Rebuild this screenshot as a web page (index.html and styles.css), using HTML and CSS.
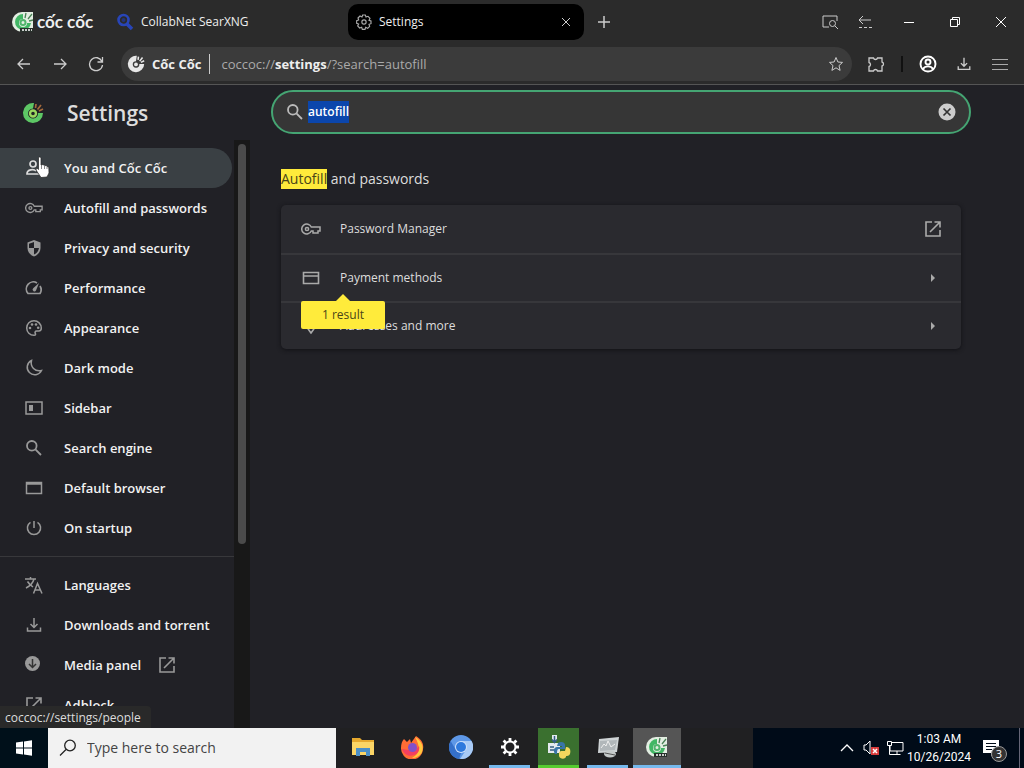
FILE: index.html
```html
<!DOCTYPE html>
<html lang="en">
<head>
<meta charset="utf-8">
<title>Settings</title>
<link rel="stylesheet" href="styles.css">
</head>
<body>
<svg class="sprite" aria-hidden="true">
  <symbol id="key" viewBox="0 0 20 14"><g fill="none" stroke="currentColor" stroke-width="1.5"><path d="M10.3 5A5 5 0 1 0 10.3 9H12v2h5V9h2V5Z"/><circle cx="6" cy="7" r="1.6"/></g></symbol>
  <symbol id="search" viewBox="0 0 18 18"><g fill="none" stroke="currentColor" stroke-width="1.8"><circle cx="6.8" cy="6.8" r="4.8"/><path d="m10.4 10.4 5.6 5.6"/></g></symbol>
  <symbol id="open" viewBox="0 0 18 18"><path d="M8 2H2v14h14v-6M10.500 2H16v5.500M16 2 6 12" fill="none" stroke="currentColor" stroke-width="1.6"/></symbol>
  <symbol id="download" viewBox="0 0 18 18"><path d="M9 2v9M5.500 8 9 11.500 12.500 8M2.500 11.500V15h13v-3.500" fill="none" stroke="currentColor" stroke-width="1.5"/></symbol>
  <symbol id="coc" viewBox="0 0 22 22"><path d="M12 1A10 10 0 1 0 21 11L15 11A4 4 0 1 1 11 7.500Z" fill="currentColor"/><circle cx="11" cy="11.500" r="2.300" fill="currentColor"/><path d="m13.500 6 .5-4M15.500 7.500 19 3M17 9l4-2" fill="none" stroke="currentColor" stroke-width="1.900"/></symbol>
  <symbol id="cocbox" viewBox="0 0 22 22"><path d="M10 1H21V21H10A10 10 0 0 1 10 1Z" fill="#e3eee2"/><path d="M11 3A8 8 0 1 0 19 12h-4a4 4 0 1 1-4-4Z" fill="#42b765"/><circle cx="11" cy="11.500" r="2.500" fill="none" stroke="#51b56d" stroke-width="2"/><path d="m13 7 1-5M16 8l4-5M17 10l4-1" stroke="#498256" stroke-width="1.300"/><path d="M8 17h13v4H8z" fill="#27302b"/><path d="M10 19h10" stroke="#fff" stroke-width="1.500" stroke-dasharray="2 1"/></symbol>
  <symbol id="arrow" viewBox="0 0 6 10"><path d="M1 1v8l4-4Z" fill="currentColor"/></symbol>
</svg>

<header class="titlebar">
  <div class="brand"><svg class="i22"><use href="#cocbox"/></svg><span>cốc cốc</span></div>
  <button class="tab">
    <svg class="i18" viewBox="0 0 18 18"><g fill="none" stroke="#2845b8" stroke-width="2.600"><circle cx="7.500" cy="7" r="5"/><path d="m11 11 5 5" stroke-width="3.500"/></g><circle cx="7.500" cy="7" r="2" fill="#24337d"/></svg>
    <span>CollabNet SearXNG</span>
  </button>
  <div class="tab active">
    <svg class="i16" viewBox="0 0 24 24" fill="none" stroke="#aaa" stroke-width="1.700"><path d="M10 1.500h4l1 3 3-1 3 3-1.500 3 3 1v4l-3 1 1 3-3 3-3-1.500-1 3h-4l-1-3-3 1-3-3 1.500-3-3-1v-4l3-1-1-3 3-3 3 1.500Z"/><circle cx="12" cy="12" r="3.200"/></svg>
    <span>Settings</span>
    <button class="tool" aria-label="Close tab"><svg class="i12" viewBox="0 0 12 12"><path d="m2 2 8 8m0-8-8 8"/></svg></button>
  </div>
  <button class="tool" aria-label="New tab"><svg class="i14" viewBox="0 0 14 14"><path d="M7 1v12M1 7h12" stroke-width="1.500"/></svg></button>
  <div class="window-tools">
    <button class="tool" aria-label="Search tabs"><svg class="i18" viewBox="0 0 18 18"><path d="M8 14H2V3h14v5"/><circle cx="11.500" cy="10.500" r="3"/><path d="m14 13 3 3"/></svg></button>
    <button class="tool" aria-label="Recent tabs"><svg class="i16" viewBox="0 0 16 16"><path d="M14 6H2M6 2 2 6l4 4M2 13.500h3m2 0h3m2 0h3"/></svg></button>
  </div>
  <div class="window-controls">
    <button class="tool" aria-label="Minimize"><svg class="i12" viewBox="0 0 12 12"><path d="M1 6.500h10"/></svg></button>
    <button class="tool" aria-label="Restore"><svg class="i12" viewBox="0 0 12 12"><path d="M1.500 3.500h7v7h-7zM3.500 3V1.500h7v7H9"/></svg></button>
    <button class="tool" aria-label="Close"><svg class="i12" viewBox="0 0 12 12"><path d="m1 1 10 10M11 1 1 11"/></svg></button>
  </div>
</header>

<nav class="toolbar" aria-label="Browser">
  <button class="tool" aria-label="Back"><svg class="i16" viewBox="0 0 16 16"><path d="M14 8H2m5-5L2 8l5 5" stroke-width="1.300"/></svg></button>
  <button class="tool" aria-label="Forward"><svg class="i16" viewBox="0 0 16 16"><path d="M2 8h12M9 3l5 5-5 5" stroke-width="1.300"/></svg></button>
  <button class="tool" aria-label="Reload"><svg class="i16" viewBox="0 0 16 16"><path d="M14 5.500A6.500 6.500 0 1 0 14.500 9M14.500 1v5H9.500" stroke-width="1.300"/></svg></button>
  <div class="address">
    <svg class="i18"><use href="#coc"/></svg><b class="site">Cốc Cốc</b>
    <div class="url" role="textbox" contenteditable="true" spellcheck="false" aria-label="Address">coccoc://<b>settings</b>/?search=autofill</div>
    <button class="tool" aria-label="Bookmark"><svg class="i16" viewBox="0 0 16 16"><path d="m8 1.500 1.900 4.500 4.600.4-3.500 3.200 1.100 4.800L8 11.800l-4.100 2.600L5 9.600 1.500 6.400 6.100 6Z"/></svg></button>
  </div>
  <div class="actions">
    <button class="tool" aria-label="Extensions"><svg class="i18" viewBox="0 0 18 18"><path d="M2 3h4.500C7 5 10 5 10.500 3H15v4c2 .5 2 3.500 0 4v5h-4.500c-.5-2-3.500-2-4 0H2v-4.500c2-.5 2-3.500 0-4Z" stroke-width="1.300"/></svg></button>
    <span class="rule"></span>
    <button class="tool" aria-label="Profile"><svg class="i18 bright" viewBox="0 0 18 18"><circle cx="9" cy="9" r="7.500" stroke-width="1.900"/><circle cx="9" cy="7" r="2.500" stroke-width="1.900"/><path d="M4 14c2-3.500 8-3.500 10 0" stroke-width="1.900"/></svg></button>
    <button class="tool" aria-label="Downloads"><svg class="i16"><use href="#download"/></svg></button>
    <button class="tool" aria-label="Menu"><svg class="i16 dim" viewBox="0 0 16 16"><path d="M0 3.500h16M0 8.500h16M0 13.500h16"/></svg></button>
  </div>
</nav>

<div class="content">
  <aside class="sidebar">
    <div class="side-head"><svg class="i22" viewBox="0 0 22 22"><path d="M12 1A10 10 0 1 0 21 11L16 11A5 5 0 1 1 11 6.500Z" fill="#5dc765"/><circle cx="11" cy="11.500" r="3" fill="none" stroke="#9bd85f" stroke-width="2.400"/><path d="m13.500 6 .5-4M15.500 7.500 19 3M17 9l4-2" stroke="#a56a3c" stroke-width="1.700"/></svg><h1>Settings</h1></div>
    <div class="side-body">
      <nav class="menus" aria-label="Settings">
        <ul class="menu">
          <li><a href="#people" class="current"><svg class="i18" viewBox="0 0 18 18"><g fill="none" stroke="#ddd" stroke-width="1.700"><circle cx="8" cy="5" r="3"/><path d="M14 15H2c0-5 7-5 9-3"/></g></svg>You and Cốc Cốc</a>
            <svg class="cursor" viewBox="0 0 14 24"><path d="M3 1.500c1-1 2.500-.5 2.500 1V9l1-.5 2 .5.800.5 1.700.3.500.7 1.800.5.200 6-2 4-6 .5L.5 14c0-2 1.500-2 2.500-.5Z" fill="#fff" stroke="#222" stroke-width=".7"/><path d="M6 9v4M9 10v3M11.500 11v2" stroke="#555" stroke-width=".7"/></svg></li>
          <li><a href="#autofill"><svg class="i18"><use href="#key"/></svg>Autofill and passwords</a></li>
          <li><a href="#privacy"><svg class="i18" viewBox="0 0 18 18"><path d="M9 1 2.500 3.500V9C2.500 13 5 16 9 17.500 13 16 15.500 13 15.500 9V3.500Z" fill="currentColor"/><path d="M9 3v6H4V4.800ZM9 9h5c-.4 3-2.200 5.300-5 6.500Z" fill="#212126"/></svg>Privacy and security</a></li>
          <li><a href="#performance"><svg class="i18" viewBox="0 0 18 18"><path d="M12 4A7 7 0 0 0 3 14.500h12A7 7 0 0 0 15 7" fill="none" stroke="currentColor" stroke-width="1.700"/><path d="m14 4-3 7.500a1.800 1.800 0 1 1-2.800-2.200Z" fill="currentColor"/></svg>Performance</a></li>
          <li><a href="#appearance"><svg class="i18" viewBox="0 0 18 18"><path d="M9 1.700a7.300 7.300 0 1 0 0 14.600c2 0 1.700-1.300 1.200-2-.5-1 0-2.200 1.300-2.200h2.300c1.500 0 2.500-1.400 2.500-3C16.300 5 13 1.700 9 1.700Z" fill="none" stroke="currentColor" stroke-width="1.500"/><g fill="currentColor"><circle cx="5" cy="9" r="1.300"/><circle cx="7" cy="5.500" r="1.300"/><circle cx="11" cy="5.500" r="1.300"/><circle cx="13.200" cy="8.700" r="1.300"/></g></svg>Appearance</a></li>
          <li><a href="#dark"><svg class="i18" viewBox="0 0 18 18"><path d="M6.500 1.500a7.500 7.500 0 1 0 10 10C10 13 5 8 6.500 1.500Z" fill="none" stroke="currentColor" stroke-width="1.500"/></svg>Dark mode</a></li>
          <li><a href="#sidebar"><svg class="i18" viewBox="0 0 18 18"><path d="M1 3h16v12H1z" fill="none" stroke="currentColor" stroke-width="1.500"/><path d="M4 6h4v6H4z" fill="currentColor"/></svg>Sidebar</a></li>
          <li><a href="#engine"><svg class="i18"><use href="#search"/></svg>Search engine</a></li>
          <li><a href="#browser"><svg class="i18" viewBox="0 0 18 18"><path d="M1.500 3.500h15v11h-15zM1.500 5h15" fill="none" stroke="currentColor" stroke-width="1.500"/></svg>Default browser</a></li>
          <li><a href="#startup"><svg class="i18" viewBox="0 0 18 18"><path d="M9 2v7M5.500 3.300a6.600 6.600 0 1 0 7 0" fill="none" stroke="currentColor" stroke-width="1.500"/></svg>On startup</a></li>
        </ul>
        <ul class="menu">
          <li><a href="#languages"><svg class="i18" viewBox="0 0 18 18"><path d="M0 3h11M5.500 1v2M9 3C8 7 4 10.500 1 12M2.500 5.500C4 8 6 9.500 8 11M8.500 17.500 12.500 7.500l4.500 10M10 14h5.500" fill="none" stroke="currentColor" stroke-width="1.500"/></svg>Languages</a></li>
          <li><a href="#downloads"><svg class="i18"><use href="#download"/></svg>Downloads and torrent</a></li>
          <li><a href="#media"><svg class="i18" viewBox="0 0 18 18"><circle cx="7.500" cy="7.500" r="7.500" fill="currentColor"/><path d="M7.500 3v8M4 8l3.500 3.500L11 8" fill="none" stroke="#333" stroke-width="1.500"/></svg>Media panel<svg class="i18 out"><use href="#open"/></svg></a></li>
          <li><a href="#adblock"><svg class="i18"><use href="#open"/></svg>Adblock</a></li>
        </ul>
      </nav>
      <div class="scroll"><div class="thumb"></div></div>
    </div>
  </aside>
  <main>
    <div class="find"><label for="q" aria-label="Search settings"><svg class="i18"><use href="#search"/></svg></label><input id="q" type="text" value="autofill" spellcheck="false"><button aria-label="Clear search"><svg class="i18" viewBox="0 0 18 18"><circle cx="9" cy="9" r="8.500" fill="#ccc"/><path d="m5.500 5.500 7 7m0-7-7 7" stroke="#333" stroke-width="1.700"/></svg></button></div>
    <section class="results">
      <h2><mark>Autofill</mark> and passwords</h2>
      <div class="card">
        <a href="#pm"><svg class="i20"><use href="#key"/></svg><span>Password Manager</span><svg class="i18"><use href="#open"/></svg></a>
        <a href="#pay"><svg class="i20" viewBox="0 0 20 20"><path d="M2.500 4.500h15v11h-15zM2.500 8h15" fill="none" stroke="currentColor" stroke-width="1.600"/></svg><span>Payment methods</span><svg class="chev"><use href="#arrow"/></svg></a>
        <a href="#addr"><svg class="i20" viewBox="0 0 20 20"><path d="M10 17C7 13 5 10.500 5 8a5 5 0 0 1 10 0c0 2.500-2 5-5 9Z" fill="none" stroke="currentColor" stroke-width="1.600"/></svg><span>Addresses and more</span><svg class="chev"><use href="#arrow"/></svg></a>
        <div class="bubble" role="status">1 result</div>
      </div>
    </section>
  </main>
  <div class="status">coccoc://settings/people</div>
</div>

<footer class="taskbar">
  <button class="start" aria-label="Start"><svg class="i16" viewBox="0 0 16 16"><path d="m0 2.500 7-1v6H0Zm8-1L16 .3v7.200H8ZM0 8.500h7v6l-7-1Zm8 0h8v7.200l-8-1.200Z" fill="#fff"/></svg></button>
  <div class="winsearch"><label for="win" aria-label="Windows search"><svg class="i18" viewBox="0 0 18 18"><g fill="none" stroke="#222" stroke-width="1.300"><circle cx="11" cy="6.500" r="5.300"/><path d="m7 10.500-6 6"/></g></svg></label><input id="win" type="text" placeholder="Type here to search"></div>
  <div class="apps">
    <button class="app" aria-label="File Explorer"><svg class="i24" viewBox="0 0 24 24"><path d="M1 3h8l2 2h12v15H1z" fill="#e6a92e"/><path d="M1 7h22v13H1z" fill="#fbd566"/><path d="M5 21v-8h14v8h-4v-4H9v4z" fill="#4b8fc7"/></svg></button>
    <button class="app" aria-label="Firefox"><svg class="i24" viewBox="0 0 24 24"><path d="M4 4 7 7l3-3 1 4 5-7c6 4 8 8 7 13a11 11 0 0 1-22-1C1 9 2 6 4 4Z" fill="#ff6c35"/><path d="M15 2c7 4 9 10 7 15-2 4-6 6-10 6 9-5 8-12 3-21Z" fill="#ffc83d"/><path d="M2 14c2 6 7 8 12 6 4-1 6-5 5-9l-4 5Z" fill="#f43f60"/><circle cx="12.500" cy="12.500" r="4.500" fill="#8150c9"/></svg></button>
    <button class="app" aria-label="Chromium"><svg class="i24" viewBox="0 0 24 24"><circle cx="12" cy="12" r="12" fill="#5e98e7"/><path d="M12 6h10.500A12 12 0 0 1 11 24l6-9Z" fill="#a9cbf6"/><path d="M1.600 6 7 15l5 3-2 6A12 12 0 0 1 1.600 6Z" fill="#3570c9"/><circle cx="12" cy="12" r="6" fill="#cfe0fa"/><circle cx="12" cy="12" r="5" fill="#2e79dd"/></svg></button>
    <button class="app running" aria-label="Settings app"><svg class="i20" viewBox="0 0 20 20" fill="none" stroke="#fff"><circle cx="10" cy="10" r="5.500" stroke-width="2"/><path d="M10 1v3m0 12v3M1 10h3m12 0h3M3.600 3.600l2.200 2.200m8.400 8.400 2.200 2.200m0-12.800-2.200 2.200m-8.400 8.400-2.200 2.200" stroke-width="2.800"/></svg></button>
    <button class="app python" aria-label="Python"><svg class="i24" viewBox="0 0 24 24"><path d="M5 0h5v6H5zM1 8h12v10H1z" fill="#e3e9ef"/><path d="M7.500 1v6M5 4.500l2.500 3 2.500-3M3 12h4M3 15h6" fill="none" stroke="#355d83" stroke-width="1.500"/><path d="M11 8c3-2 7-1 7 2v4h-6c-2 0-2 2-2 5H8c-2-3-1-7 2-7h5v-1h-5Z" fill="#3975a8"/><path d="M19 12c4 0 5 3 4 7-1 2-3 2-4 2 1 3-6 4-7 0v-3c0-2 2-2 6-2Z" fill="#f3d85d"/></svg></button>
    <button class="app running" aria-label="Monitor"><svg class="i24" viewBox="0 0 24 24"><path d="m3 4 20-2-2 15-19 1Z" fill="#ced3d5"/><path d="m4 6 17-1-2 10-15 1Z" fill="#b1b7ba"/><path d="m5 13 3-4 2 2 2-5 3 6 4-3" fill="none" stroke="#eee"/><ellipse cx="14" cy="19" rx="6" ry="3.500" fill="#c5caca"/><path d="m9 18 10 2" stroke="#555"/></svg></button>
    <button class="app front" aria-label="Cốc Cốc"><svg class="i22"><use href="#cocbox"/></svg></button>
  </div>
  <div class="tray">
    <button class="tool" aria-label="Hidden icons"><svg class="i14" viewBox="0 0 14 14"><path d="m1 10 6-6 6 6" stroke-width="1.300"/></svg></button>
    <button class="tool" aria-label="Volume muted"><svg class="i18" viewBox="0 0 18 18"><path d="M2 6h2l4-4v13l-4-4H2Z"/><path d="M9 8h8v8H9z" fill="#d83a3a" stroke="none"/><path d="m11 10 4 4m0-4-4 4" stroke-width="1.500"/></svg></button>
    <button class="tool" aria-label="Network"><svg class="i18" viewBox="0 0 18 18"><path d="M5 3.500h12v8.500H4V7M1.500 2.500h4v4h-4zM3.500 7v8.500h5M11 12v3M7.500 15.500h7"/></svg></button>
    <button class="clock"><span>1:03 AM</span><span>10/26/2024</span></button>
    <button class="tool note" aria-label="3 notifications"><svg class="i18" viewBox="0 0 18 18"><path d="M1 1h16v13h-5l-3 3v-3H1z" fill="#fff" stroke="none"/><path d="M4 4.500h10M4 7.500h10M4 10.500h6" stroke="#000b18"/></svg><span class="badge">3</span></button>
    <button class="desktop" aria-label="Show desktop"></button>
  </div>
</footer>
<script src="app.js"></script>
</body>
</html>
```

FILE: styles.css
```css
* { box-sizing: border-box; }
body { margin: 0; height: 100vh; display: flex; flex-direction: column; overflow: hidden; background: #2b2b2b; color: #e8e8e8; font: 13px/20px "Open Sans", "Noto Sans", sans-serif; }
button { padding: 0; border: 0; background: none; color: inherit; font: inherit; }
input { min-width: 0; border: 0; outline: 0; background: none; font: inherit; }
a { color: inherit; text-decoration: none; }
b { font-weight: 700; }
svg { display: block; flex: none; }
.sprite { position: absolute; width: 0; height: 0; }
.i12 { width: 12px; height: 12px; }
.i14 { width: 14px; height: 14px; }
.i16 { width: 16px; height: 16px; }
.i18 { width: 18px; height: 18px; }
.i20 { width: 20px; height: 20px; }
.i22 { width: 22px; height: 22px; }
.i24 { width: 24px; height: 24px; }
.tool { display: flex; align-items: center; justify-content: center; flex: none; width: 36px; height: 36px; color: #ccc; }
.tool svg { fill: none; stroke: #ccc; }
.tool .bright { stroke: #fff; }
.tool .dim { stroke: #aaa; }

.titlebar { display: flex; align-items: center; flex: none; height: 44px; }
.brand { display: flex; align-items: center; gap: 3px; width: 106px; padding-left: 12px; color: #eee; font: 700 17px/24px "Lato", "Open Sans", sans-serif; white-space: nowrap; }
.tab { display: flex; align-items: center; gap: 7px; flex: 0 1 236px; height: 36px; padding-left: 10px; font-size: 12px; color: #eee; text-align: left; white-space: nowrap; }
.tab.active { margin-left: 6px; background: #000; border-radius: 10px; padding-left: 8px; }
.tab.active .tool { margin-left: auto; }
.tab.active + .tool { margin-left: 2px; }
.window-tools { display: flex; margin-left: auto; padding-right: 4px; }
.window-tools .tool { width: 35px; }
.window-controls { display: flex; }
.window-controls .tool { width: 46px; }
.window-controls svg { stroke: #fff; }

.toolbar { display: flex; align-items: center; flex: none; height: 40px; padding: 0 6px; }
.address { display: flex; align-items: center; flex: 1; height: 34px; margin-left: 7px; padding-left: 6px; border-radius: 17px; background: #3b3b3b; }
.site { margin-left: 7px; padding-right: 8px; border-right: 1px solid #ccc; color: #eee; white-space: nowrap; }
.url { flex: 1; padding-left: 11px; color: #aaa; outline: 0; white-space: nowrap; }
.url b { color: #eee; }
.address .tool { width: 32px; }
.actions { display: flex; align-items: center; margin-left: 6px; }
.rule { width: 2px; height: 16px; margin: 0 7px; background: #111; }

.content { position: relative; display: flex; flex: 1; min-height: 0; background: #212126; border-top: 1px solid #555; }
.sidebar { display: flex; flex-direction: column; flex: none; width: 250px; }
.side-head { display: flex; align-items: center; gap: 23px; flex: none; height: 55px; padding-left: 22px; }
h1 { margin: 0; font-size: 21px; line-height: 28px; font-weight: 600; color: #ddd; }
.side-body { display: flex; flex: 1; min-height: 0; }
.menus { flex: 1; padding-top: 8px; overflow: hidden; }
.menu { margin: 0; padding: 0; list-style: none; }
.menu + .menu { margin-top: 8px; padding-top: 8px; border-top: 1px solid #38383b; }
.menu li { position: relative; }
.menu a { display: flex; align-items: center; gap: 21px; height: 40px; margin-right: 2px; padding-left: 25px; font-weight: 600; color: #f2f2f2; white-space: nowrap; }
.menu svg { color: #999; }
.menu .out { margin-left: -4px; }
.menu .current { background: #3a4044; border-radius: 0 20px 20px 0; }
.cursor { position: absolute; left: 35px; top: 8px; width: 15px; height: 24px; }
.scroll { width: 16px; padding: 4px 4px 0; background: #181818; }
.thumb { height: 400px; border-radius: 4px; background: #4b4b4b; }

main { flex: 1; min-width: 0; padding: 5px 53px 0 21px; }
.find { display: flex; align-items: center; height: 44px; padding: 0 13px; border: 2px solid #45a573; border-radius: 22px; background: #363636; color: #bbb; }
.find input { flex: 1; margin-left: 4px; padding: 0; color: #fff; font-weight: 600; font-size: 12px; line-height: 22px; }
.find input::selection { background: #0b46ac; color: #fff; }
.results { padding: 35px 10px 0; }
h2 { margin: 0 0 16px; font-size: 14px; line-height: 20px; font-weight: 400; color: #ddd; }
mark { display: inline-block; background: #ffeb3b; color: #4a4518; }
.card { position: relative; border-radius: 5px; background: #2a2a2f; box-shadow: 0 1px 4px #111115; }
.card a { display: flex; align-items: center; height: 48px; padding: 0 19px 0 20px; font-size: 12px; color: #ddd; }
.card a + a { border-top: 2px solid #37373b; }
.card span { flex: 1; margin-left: 19px; }
.card svg { color: #aaa; }
.card .chev { width: 6px; height: 10px; margin-right: 6px; }
.bubble { position: absolute; left: 20px; top: 96px; width: 84px; padding: 4px 0; border-radius: 2px; background: #ffeb3b; color: #4a4518; font-size: 12px; line-height: 20px; text-align: center; }
.bubble::before { content: ""; position: absolute; left: 35px; top: -7px; border: 7px solid transparent; border-top: 0; border-bottom-color: #ffeb3b; }
.status { position: absolute; left: 0; bottom: 0; padding: 2px 10px 0 5px; border-radius: 0 4px 0 0; background: #292929; color: #ddd; font-size: 12px; }

.taskbar { display: flex; flex: none; height: 40px; background: #202022; }
.start { display: flex; align-items: center; justify-content: center; width: 48px; background: #00101a; }
.winsearch { display: flex; align-items: center; flex: 0 1 288px; padding-left: 11px; background: #f2f2f2; }
.winsearch input { flex: 1; margin-left: 10px; padding: 0; font-size: 14px; color: #333; }
.winsearch input::placeholder { color: #444; opacity: 1; }
.apps { display: flex; gap: 8px; padding-left: 6px; }
.app { display: flex; align-items: center; justify-content: center; width: 41px; border-bottom: 3px solid transparent; }
.app.running { border-color: #76b9ed; }
.app.python { background: #3a702f; border-color: #55cc30; }
.app.front { width: 48px; margin-left: -3px; background: #555; border-color: #76b9ed; }
.tray { display: flex; align-items: center; justify-content: flex-end; flex: 0 1 271px; margin-left: auto; background: #000b18; }
.tray .tool { width: 24px; }
.tray .tool svg { stroke: #fff; }
.clock { display: flex; flex-direction: column; align-items: center; width: 64px; font: 12px/18px "Roboto", "Open Sans", sans-serif; color: #fff; }
.tray .note { position: relative; width: 40px; }
.tray .tool .i14 { margin: 0; }
.badge { position: absolute; left: 20px; top: 16px; width: 16px; height: 16px; border: 1px solid #999; border-radius: 8px; background: #333; color: #fff; font-size: 11px; line-height: 14px; text-align: center; }
.desktop { align-self: stretch; width: 5px; margin-left: 8px; border-left: 1px solid #667; }
```

FILE: app.js
```js
const query = document.getElementById("q");
query.focus();
query.select();
```
